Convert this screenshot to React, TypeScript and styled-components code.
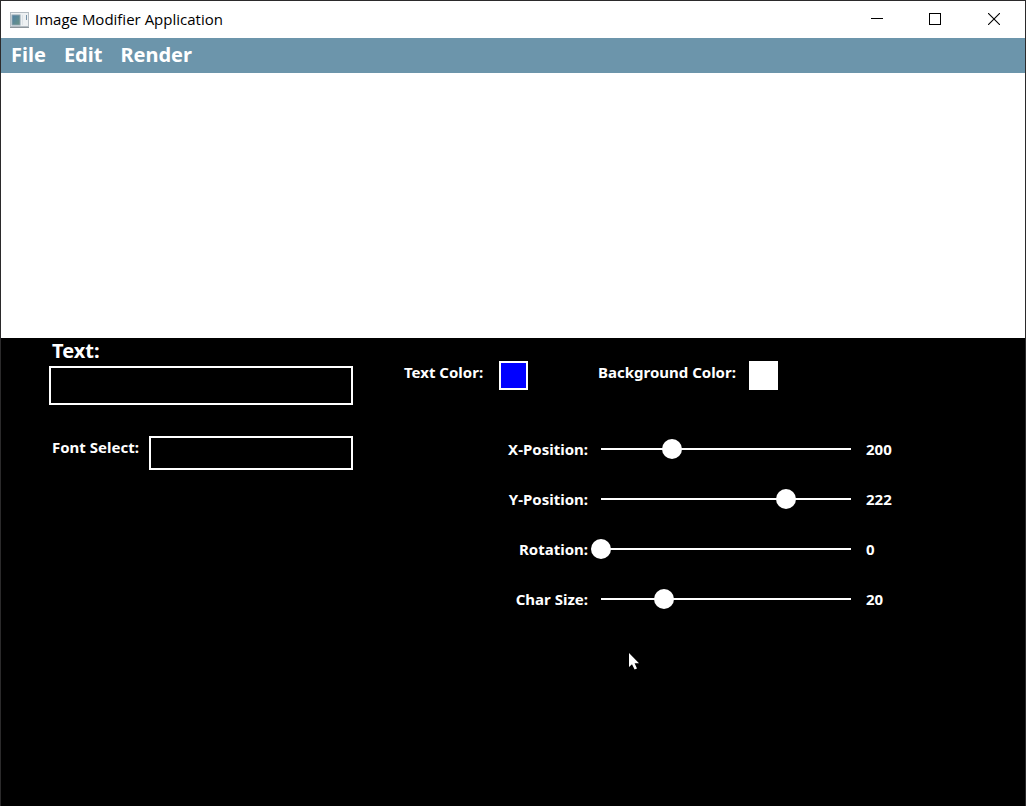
import React, { useState } from "react";
import styled, { createGlobalStyle } from "styled-components";

const GlobalStyle = createGlobalStyle`
  * { box-sizing: border-box; }
  body { margin: 0; background: #000; }
`;

const Window = styled.div`
  display: flex;
  flex-direction: column;
  min-height: 100vh;
  border: 1px solid #2b2a2b;
  border-bottom: 0;
  background: #000;
  color: #fff;
  font-family: "Noto Sans", "Open Sans", sans-serif;
  font-weight: 700;
`;

const TitleBar = styled.header`
  display: flex;
  align-items: center;
  height: 37px;
  padding-left: 9px;
  background: #fff;
  color: #000;
`;

const Title = styled.h1`
  flex: 1;
  margin: 0 0 0 6px;
  font: 400 15px/20px "Open Sans", sans-serif;
  padding-bottom: 2px;
`;

const WindowButton = styled.button`
  display: grid;
  place-items: center;
  width: 58px;
  height: 36px;
  padding: 0;
  border: 0;
  background: none;
  color: #000;
`;

const WindowButtons = styled.div`
  display: flex;
  align-self: flex-start;
  padding-right: 1px;
`;

const CloseButton = styled(WindowButton)`
  width: 60px;
`;

const MenuBar = styled.nav`
  display: flex;
  align-items: flex-start;
  gap: 18px;
  height: 35px;
  padding: 0 10px;
  background: #6c95ab;
`;

const MenuButton = styled.button`
  padding: 0;
  border: 0;
  background: none;
  color: inherit;
  font: inherit;
  font-size: 20px;
  line-height: 33px;
`;

const Preview = styled.main`
  height: 265px;
  background: #fff;
`;

const Panel = styled.section`
  display: flex;
  flex: 1;
  gap: 51px;
  padding: 0 48px;
`;

const TextColumn = styled.div`
  display: flex;
  flex-direction: column;
  width: 304px;
`;

const Heading = styled.label`
  padding: 0 0 2px 3px;
  font-size: 20px;
  line-height: 26px;
`;

const TextInput = styled.input`
  height: 39px;
  padding: 0 8px;
  border: 2px solid #fff;
  border-radius: 0;
  outline: 0;
  background: #000;
  color: #fff;
  font: inherit;
  font-size: 20px;
`;

const FontRow = styled.div`
  display: flex;
  justify-content: space-between;
  margin-top: 31px;
  padding-left: 3px;
`;

const Label = styled.label`
  font-size: 15px;
  line-height: 22px;
  white-space: nowrap;
`;

const FontSelect = styled.select`
  width: 204px;
  height: 34px;
  padding: 0 8px;
  border: 2px solid #fff;
  border-radius: 0;
  outline: 0;
  appearance: none;
  background: #000;
  color: #fff;
  font: inherit;
  font-size: 15px;
`;

const SettingsColumn = styled.div`
  flex: 1;
  padding-top: 23px;
`;

const ColorRow = styled.div`
  display: grid;
  grid-template-columns: 95px 99px 151px 29px;
`;

const Swatch = styled.input`
  width: 29px;
  height: 29px;
  padding: 0;
  border: 2px solid #fff;
  appearance: none;
  background: none;
  &::-webkit-color-swatch-wrapper { padding: 0; }
  &::-webkit-color-swatch { border: 0; border-radius: 0; }
`;

const Sliders = styled.div`
  display: grid;
  grid-template-columns: 187px 270px auto;
  grid-auto-rows: 50px;
  align-items: center;
  justify-content: start;
  margin-top: 34px;
`;

const SliderLabel = styled(Label)`
  padding-right: 3px;
  text-align: right;
`;

const SliderValue = styled.output`
  padding-left: 5px;
  font-size: 15px;
  line-height: 22px;
`;

const Range = styled.input`
  width: 100%;
  height: 20px;
  margin: 0;
  appearance: none;
  background: linear-gradient(#fff, #fff) center / calc(100% - 20px) 2px no-repeat;
  &::-webkit-slider-thumb {
    width: 20px;
    height: 20px;
    border: 0;
    border-radius: 50%;
    appearance: none;
    background: #fff;
  }
`;

const Pointer = styled.svg`
  position: absolute;
  left: 629px;
  top: 653px;
  pointer-events: none;
`;

function AppIcon() {
  return (
    <svg width="19" height="16" viewBox="0 0 19 16" aria-hidden="true">
      <defs>
        <linearGradient id="pane" x1="0" y1="0" x2="1" y2="1">
          <stop offset="0" stopColor="#4d7fa6" />
          <stop offset="1" stopColor="#6b9384" />
        </linearGradient>
      </defs>
      <rect x="0.5" y="0.5" width="18" height="14" fill="#eef1f3" stroke="#b4bcc2" />
      <path d="M0 15.5H19" stroke="#8d959b" />
      <rect x="2" y="3" width="8" height="10" fill="url(#pane)" stroke="#8ba2ad" />
      <path d="M16.5 3V8" stroke="#7793a8" />
      <path d="M12.5 3V13" stroke="#dce2e6" />
    </svg>
  );
}

type SliderProps = { id: string; label: string; max: number; initial: number };

function Slider({ id, label, max, initial }: SliderProps) {
  const [value, setValue] = useState(initial);
  return (
    <>
      <SliderLabel htmlFor={id}>{label}</SliderLabel>
      <Range id={id} type="range" min={0} max={max} value={value} onChange={(e) => setValue(Number(e.target.value))} />
      <SliderValue htmlFor={id}>{value}</SliderValue>
    </>
  );
}

export default function App() {
  return (
    <>
      <GlobalStyle />
      <Window>
        <TitleBar>
          <AppIcon />
          <Title>Image Modifier Application</Title>
          <WindowButtons>
            <WindowButton aria-label="Minimize">
              <svg width="12" height="12" shapeRendering="crispEdges"><path d="M0 5.5H12" stroke="currentColor" /></svg>
            </WindowButton>
            <WindowButton aria-label="Maximize">
              <svg width="12" height="12" shapeRendering="crispEdges"><rect x="0.5" y="0.5" width="11" height="11" fill="none" stroke="currentColor" /></svg>
            </WindowButton>
            <CloseButton aria-label="Close">
              <svg width="12" height="12"><path d="M0 0L12 12M12 0L0 12" stroke="currentColor" strokeWidth="1.1" /></svg>
            </CloseButton>
          </WindowButtons>
        </TitleBar>
        <MenuBar>
          <MenuButton>File</MenuButton>
          <MenuButton>Edit</MenuButton>
          <MenuButton>Render</MenuButton>
        </MenuBar>
        <Preview />
        <Panel>
          <TextColumn>
            <Heading htmlFor="text">Text:</Heading>
            <TextInput id="text" type="text" />
            <FontRow>
              <Label htmlFor="font">Font Select:</Label>
              <FontSelect id="font"><option value="" /></FontSelect>
            </FontRow>
          </TextColumn>
          <SettingsColumn>
            <ColorRow>
              <Label htmlFor="text-color">Text Color:</Label>
              <Swatch id="text-color" type="color" defaultValue="#0000ff" />
              <Label htmlFor="background-color">Background Color:</Label>
              <Swatch id="background-color" type="color" defaultValue="#ffffff" />
            </ColorRow>
            <Sliders>
              <Slider id="x-position" label="X-Position:" max={700} initial={200} />
              <Slider id="y-position" label="Y-Position:" max={300} initial={222} />
              <Slider id="rotation" label="Rotation:" max={360} initial={0} />
              <Slider id="char-size" label="Char Size:" max={80} initial={20} />
            </Sliders>
          </SettingsColumn>
        </Panel>
      </Window>
      <Pointer width="12" height="18" viewBox="0 0 12 18" aria-hidden="true">
        <path d="M0 0V14L3 11.2L5.6 16.6L8 15.5L5.6 10.2H10Z" fill="#fff" />
      </Pointer>
    </>
  );
}
